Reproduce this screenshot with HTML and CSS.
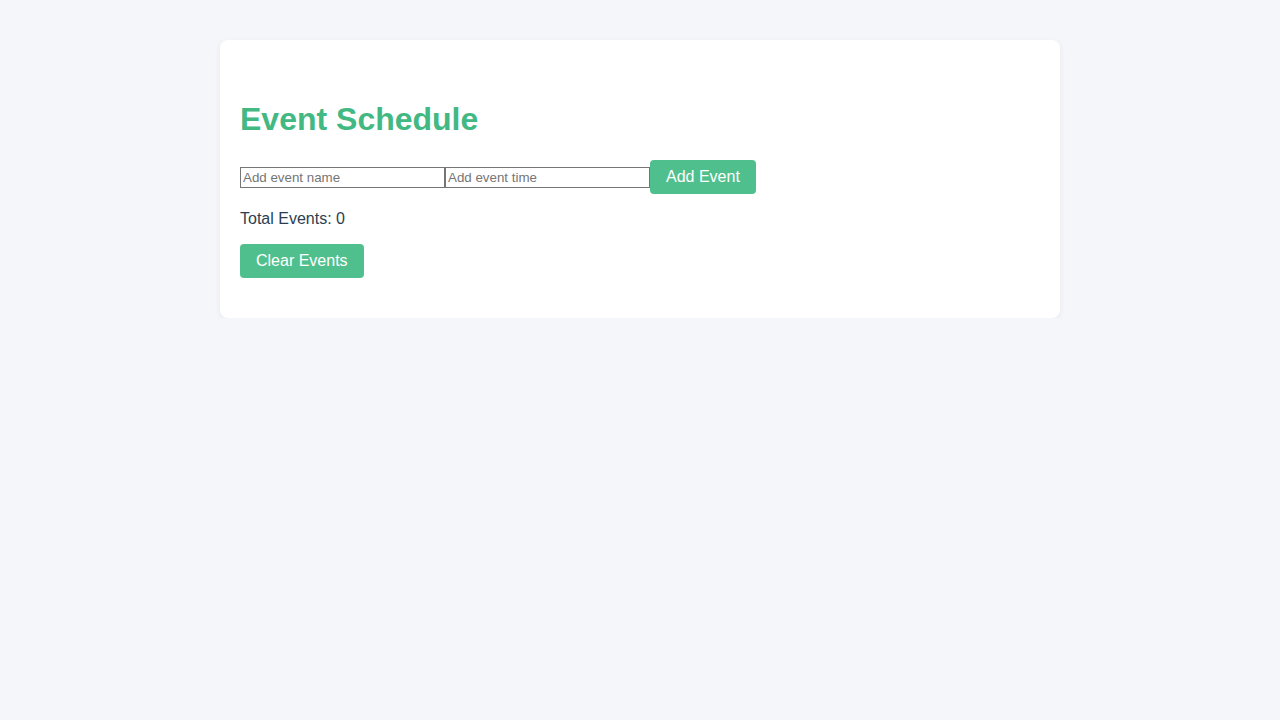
FILE: index.html
```html
<!DOCTYPE html>
<html lang="en">
<head>
<meta charset="utf-8">
<title>Event Schedule</title>
<link rel="stylesheet" href="styles.css">
</head>
<body>
  <div class="card">
    <h1 class="title">Event Schedule</h1>
    <div class="form-row">
      <input class="field" type="text" placeholder="Add event name">
      <input class="field" type="text" placeholder="Add event time">
      <button class="btn">Add Event</button>
    </div>
    <p class="total">Total Events: 0</p>
    <button class="btn">Clear Events</button>
  </div>
</body>
</html>
```

FILE: styles.css
```css
html, body {
  margin: 0;
  padding: 0;
}
body {
  background: #f4f6fa;
  font-family: "Liberation Sans", Arial, sans-serif;
  color: #2c3e50;
}
.card {
  width: 840px;
  box-sizing: border-box;
  margin: 40px auto 0;
  padding: 40px 20px;
  background: #ffffff;
  border-radius: 8px;
  box-shadow: 0 2px 6px rgba(0, 0, 0, 0.06);
}
.title {
  margin: 21px 0 22px;
  font-size: 32px;
  line-height: 37px;
  font-weight: bold;
  color: #42b883;
}
.form-row {
  display: flex;
  align-items: center;
  height: 34px;
}
.field {
  width: 205px;
  height: 21px;
  box-sizing: border-box;
  margin: 0;
  padding: 1px 2px;
  border: 1px solid #767676;
  border-radius: 0;
  font-family: "Liberation Sans", Arial, sans-serif;
  font-size: 13.33px;
  color: #000;
}
.field::placeholder {
  color: #757575;
}
.btn {
  display: inline-block;
  height: 34px;
  margin: 0;
  padding: 0 16px;
  border: none;
  border-radius: 4px;
  background: #4fc08d;
  color: #ffffff;
  font-family: "Liberation Sans", Arial, sans-serif;
  font-size: 16px;
  line-height: 34px;
  cursor: pointer;
}
.total {
  margin: 16px 0;
  font-size: 16px;
  line-height: 18px;
}
```
